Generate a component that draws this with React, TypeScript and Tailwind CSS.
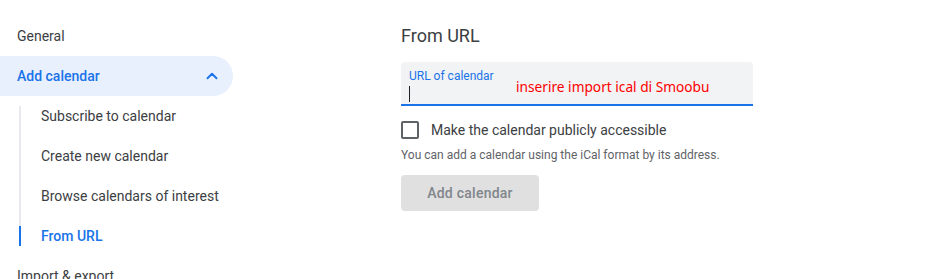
import React from 'react';
import { ChevronUp } from 'lucide-react';

const subItems = ['Subscribe to calendar', 'Create new calendar', 'Browse calendars of interest', 'From URL'];

const Sidebar: React.FC = () => {
    const active = 'From URL';
    return (
        <nav className="w-[256px] shrink-0 pt-[16px] pr-[23px]">
            <div className="h-[40px] flex items-center pl-[17px] text-[14px] text-[#3c4043]">General</div>
            <div className="h-[40px] flex items-center justify-between pl-[17px] pr-[12px] bg-[#e8f0fe] rounded-r-full text-[14px] font-medium text-[#1a73e8]">
                <span>Add calendar</span>
                <ChevronUp className="w-[18px] h-[18px]" strokeWidth={2.5} />
            </div>
            <div className="relative">
                {/* tree line */}
                <div className="absolute left-[19px] top-[10px] bottom-[10px] w-[2px] bg-[#e8eaed]" />
                {subItems.map((item) => (
                    <div key={item} className="relative h-[40px] flex items-center pl-[41px] text-[14px]">
                        {item === active && <div className="absolute left-[19px] top-[10px] bottom-[10px] w-[2px] bg-[#1a73e8]" />}
                        <span className={item === active ? 'text-[#1a73e8] font-medium' : 'text-[#3c4043]'}>{item}</span>
                    </div>
                ))}
            </div>
            <div className="h-[40px] flex items-center pl-[17px] text-[14px] text-[#3c4043]">Import &amp; export</div>
        </nav>
    );
};

export default function App() {
    return (
        <div className="w-[937px] h-[279px] overflow-hidden bg-white flex font-['Roboto',sans-serif]">
            <Sidebar />
            <main className="pl-[145px] pt-[24px]">
                <h2 className="text-[18px] leading-[24px] text-[#3c4043]">From URL</h2>
                <div className="mt-[14px] w-[352px] h-[44px] bg-[#f1f3f4] rounded-t-[4px] border-b-2 border-[#1a73e8] relative px-[8px] pt-[6px]">
                    <div className="text-[12px] leading-[16px] text-[#1a73e8]">URL of calendar</div>
                    <div className="mt-[2px] w-[1px] h-[16px] bg-[#202124]" />
                    <span className="absolute left-[115px] top-[15px] text-[13.7px] leading-[20px] text-[#ff0000] font-['Noto_Sans',sans-serif]">
                        inserire import ical di Smoobu
                    </span>
                </div>
                <label className="mt-[15px] flex items-center gap-[12px] h-[18px]">
                    <span className="w-[18px] h-[18px] border-2 border-[#5f6368] rounded-[2px]" />
                    <span className="text-[14px] text-[#3c4043]">Make the calendar publicly accessible</span>
                </label>
                <p className="mt-[8px] text-[12px] leading-[16px] text-[#5f6368]">
                    You can add a calendar using the iCal format by its address.
                </p>
                <button className="mt-[12px] w-[138px] h-[36px] rounded-[4px] bg-[#e0e0e0] text-[14px] font-medium text-[#80868b] tracking-[0.25px]">
                    Add calendar
                </button>
            </main>
        </div>
    );
}
